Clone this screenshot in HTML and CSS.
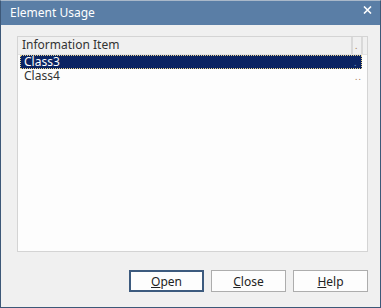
FILE: index.html
```html
<!DOCTYPE html>
<html lang="en">
<head>
    <meta charset="UTF-8">
    <title>Element Usage</title>
    <link rel="stylesheet" href="styles.css">
</head>
<body>

<div class="window">
    <div class="titlebar">
        <span class="title">Element Usage</span>
        <svg class="close-x" width="9" height="8" viewBox="0 0 9 8">
            <path d="M1 0.5 L8 7.5 M8 0.5 L1 7.5" stroke="#fff" stroke-width="1.6" fill="none"/>
        </svg>
    </div>

    <div class="content">
        <div class="listbox">
            <div class="list-header">
                <div class="col-main">Information Item</div>
                <div class="col-sep"></div>
                <div class="col-small"><span class="dots">.</span></div>
                <div class="col-sep"></div>
            </div>
            <div class="row selected">
                <div class="col-main">Class3</div>
                <div class="col-small"><span class="dots">.</span></div>
            </div>
            <div class="row">
                <div class="col-main">Class4</div>
                <div class="col-small"><span class="dots">..</span></div>
            </div>
        </div>

        <div class="buttons">
            <button class="btn default"><u>O</u>pen</button>
            <button class="btn"><u>C</u>lose</button>
            <button class="btn"><u>H</u>elp</button>
        </div>
    </div>
</div>

</body>
</html>
```

FILE: styles.css
```css
body {
    margin: 0;
    font-family: "Noto Sans", "Open Sans", sans-serif;
    font-size: 12px;
    background-color: #f0f0f0;
}
.window {
    width: 381px;
    height: 308px;
    box-sizing: border-box;
    border: 1px solid #3d5878;
    border-top-color: #a9b8c9;
    background-color: #f0f0f0;
    display: flex;
    flex-direction: column;
}
.titlebar {
    height: 23px;
    background-color: #5a7ea6;
    color: white;
    display: flex;
    align-items: center;
    justify-content: space-between;
    padding: 0 8px 1px 9px;
}
.title {
    font-size: 12px;
}
.close-x {
    display: block;
    margin-top: -5px;
}
.content {
    flex: 1;
    display: flex;
    flex-direction: column;
    padding: 11px 12px 0 16px;
}
.listbox {
    height: 216px;
    box-sizing: border-box;
    border: 1px solid #d4d4d4;
    background-color: #fdfdfd;
}
.list-header {
    display: flex;
    height: 17px;
    background-color: #f0f0f0;
    border-bottom: 1px solid #e3e3e3;
    color: #333;
    line-height: 16px;
}
.list-header .col-main {
    width: 329px;
    padding-left: 4px;
}
.col-sep {
    width: 2px;
    background-color: #d9d9d9;
}
.list-header .col-small {
    width: 8px;
}
.dots {
    color: #a3714b;
    font-size: 9px;
    padding-left: 2px;
    letter-spacing: 1px;
}
.row {
    display: flex;
    height: 14px;
    line-height: 14px;
    margin-left: 2px;
    width: 342px;
    color: #333;
    box-sizing: border-box;
}
.row .col-main {
    flex: 1;
    padding-left: 4px;
}
.row .col-small {
    width: 9px;
}
.row.selected {
    background-color: #0b2463;
    color: white;
    border: 1px dotted #e8d28a;
    line-height: 12px;
}
.row.selected .col-main {
    padding-left: 3px;
}
.row.selected .dots {
    color: #6b9ac8;
}
.buttons {
    display: flex;
    justify-content: flex-end;
    gap: 7px;
    margin-top: 18px;
}
.btn {
    width: 75px;
    height: 22px;
    background-color: #fdfdfd;
    border: 1px solid #adadad;
    font-family: "Noto Sans", "Open Sans", sans-serif;
    font-size: 12px;
    color: #222;
    padding: 0;
}
.btn.default {
    border: 2px solid #3c5a7e;
}
```
